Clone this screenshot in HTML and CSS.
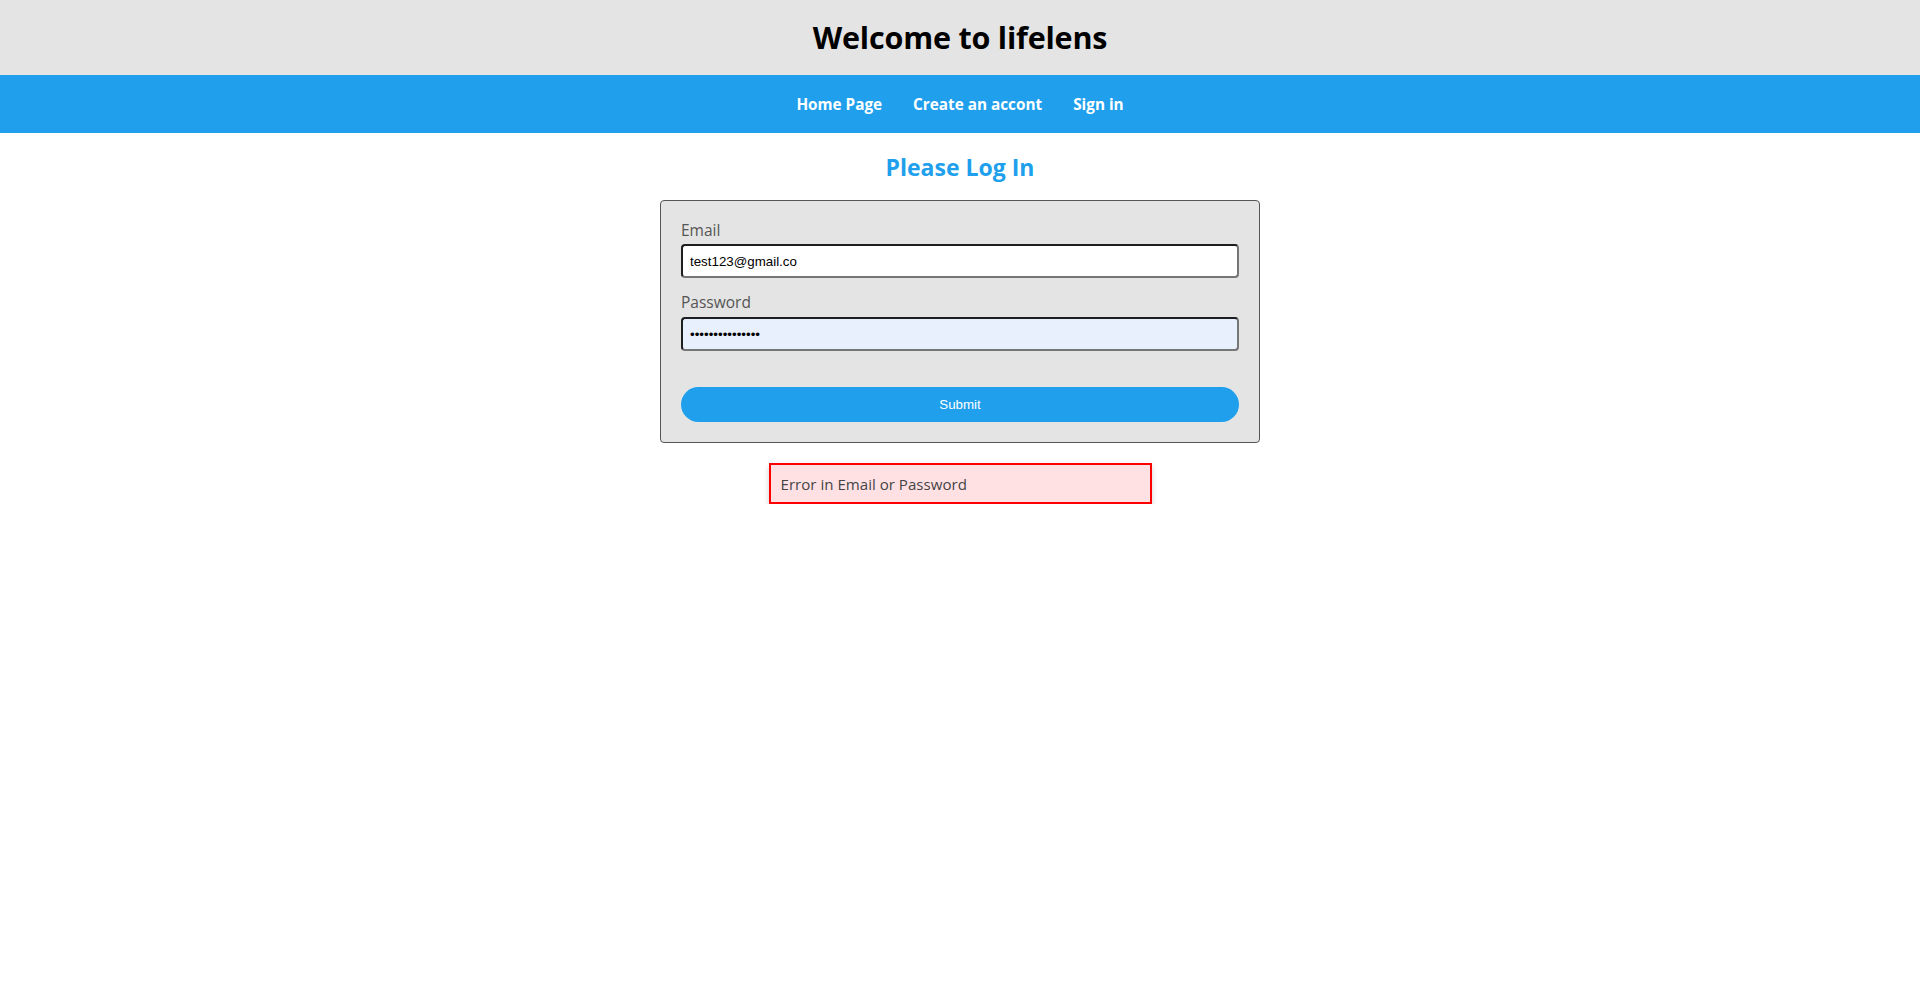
FILE: index.html
```html
<!DOCTYPE html>
<html lang="en">
<head>
<meta charset="utf-8">
<title>lifelens</title>
<link rel="stylesheet" href="styles.css">
</head>
<body>
<header class="site-header">
  <h1 class="site-title">Welcome to lifelens</h1>
</header>
<nav class="site-nav">
  <a class="nav-link" href="#">Home Page</a>
  <a class="nav-link" href="#">Create an accont</a>
  <a class="nav-link" href="#">Sign in</a>
</nav>
<main class="main">
  <h2 class="page-title">Please Log In</h2>
  <form class="login-form">
    <label class="field-label" for="email">Email</label>
    <input class="field-input" id="email" type="email" value="test123@gmail.co">
    <label class="field-label label-password" for="password">Password</label>
    <input class="field-input input-autofill" id="password" type="password" value="testpassword123">
    <button class="submit-btn" type="button">Submit</button>
  </form>
  <div class="error-box">Error in Email or Password</div>
</main>
</body>
</html>
```

FILE: styles.css
```css
* { box-sizing: border-box; }
html, body { margin: 0; padding: 0; background: #fff; }
body { font-family: "Open Sans", "Noto Sans", sans-serif; color: #000; }

.site-header {
  height: 75px;
  background: #e4e4e4;
  display: flex;
  align-items: center;
  justify-content: center;
}
.site-title {
  margin: 0;
  font-size: 30.5px;
  font-weight: 700;
  line-height: 1;
  letter-spacing: -0.2px;
}

.site-nav {
  height: 58px;
  padding-top: 2px;
  background: #209fec;
  display: flex;
  align-items: center;
  justify-content: center;
  gap: 31px;
}
.nav-link {
  color: #fff;
  text-decoration: none;
  font-weight: 700;
  font-size: 15.3px;
  line-height: 1;
}

.main {
  display: flex;
  flex-direction: column;
  align-items: center;
}
.page-title {
  margin: 0;
  padding-top: 19px;
  height: 67px;
  font-size: 23px;
  line-height: 30px;
  font-weight: 700;
  color: #209fec;
}

.login-form {
  width: 600px;
  background: #e4e4e4;
  border: 1px solid #555;
  border-radius: 4px;
  padding: 20px 20px 20px 20px;
  display: flex;
  flex-direction: column;
}
.field-label {
  font-size: 15.5px;
  line-height: 18px;
  color: #555;
  margin-bottom: 5px;
}
.label-password {
  padding-top: 1px;
  margin-top: -1px;
  margin-bottom: 6px;
}
.field-input {
  height: 34px;
  width: 100%;
  border-style: solid;
  border-width: 2px;
  border-color: #1e1e1e #767676 #767676 #1e1e1e;
  border-radius: 4px;
  padding: 0 7px;
  font-family: "Liberation Sans", Arial, sans-serif;
  font-size: 13.333px;
  color: #000;
  background: #fff;
  margin: 0 0 15px 0;
  outline: none;
}
.input-autofill {
  background: #e8f0fe;
  margin-bottom: 36px;
}
.submit-btn {
  height: 35px;
  width: 100%;
  border: none;
  border-radius: 18px;
  background: #209fec;
  color: #fff;
  font-family: "Liberation Sans", Arial, sans-serif;
  font-size: 13.333px;
  cursor: pointer;
}

.error-box {
  margin-top: 20px;
  width: 383px;
  height: 41px;
  border: 2px solid #ff0000;
  background: #ffe1e4;
  padding: 9px 10px 7px;
  font-size: 15.1px;
  line-height: 21px;
  color: #444;
  box-shadow: 0 3px 6px rgba(0,0,0,0.18);
}
```
